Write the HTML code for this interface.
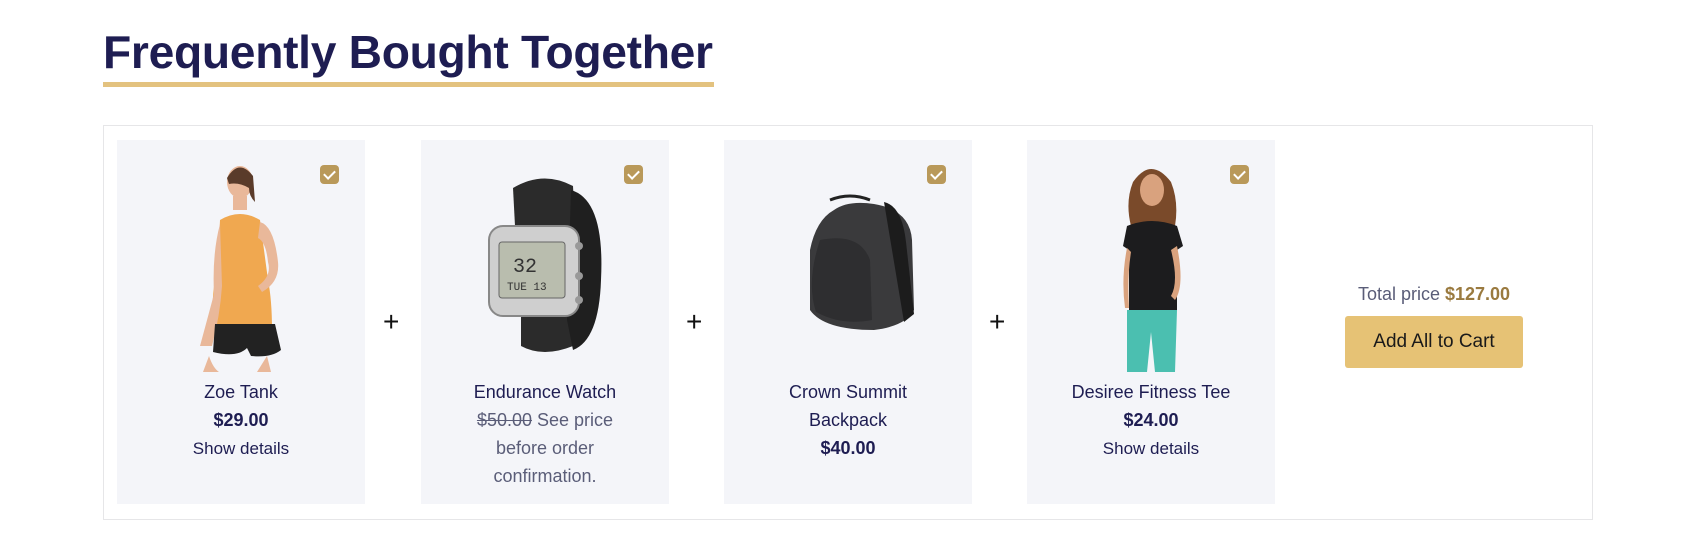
<!DOCTYPE html>
<html><head><meta charset="utf-8">
<style>
*{margin:0;padding:0;box-sizing:border-box}
body{width:1696px;height:553px;background:#fff;font-family:"Liberation Sans",sans-serif;position:relative;overflow:hidden;color:#1e1d52}
h1{position:absolute;left:103px;top:25px;font-size:46.2px;font-weight:700;color:#1e1d52;letter-spacing:-0.3px;white-space:nowrap}
.ul{position:absolute;left:103px;top:82px;width:611px;height:5px;background:#e3c27f}
.box{position:absolute;left:103px;top:125px;width:1490px;height:395px;border:1px solid #e6e6e8}
.card{position:absolute;top:140px;width:248px;height:364px;background:#f4f5f9;text-align:center}
.chk{position:absolute;right:26px;top:25px;width:19px;height:19px;border-radius:4px;background:#b9995a}
.chk:after{content:"";position:absolute;left:6px;top:3px;width:5px;height:9px;border:solid #fff;border-width:0 2.5px 2.5px 0;transform:rotate(45deg)}
.img{position:absolute;left:0;top:20px;width:248px;height:212px}
.txt{position:absolute;left:32px;right:32px;top:238px;font-size:18px;line-height:28px;color:#1e1d52}
.txt b{font-weight:700}
.txt .s{font-size:17px;color:#1e1d52}
.g{color:#5a5d78}
.plus{position:absolute;top:306px;font-size:28px;color:#111;font-weight:300}
.tot{position:absolute;left:1335px;width:198px;top:284px;text-align:center;font-size:18px;color:#5a5d78;white-space:nowrap}
.tot b{color:#9a7a3f}
.btn{position:absolute;left:1345px;top:316px;width:178px;height:52px;background:#e6c275;border-radius:3px;font-size:19px;line-height:52px;text-align:center;color:#1a1a1a}
</style></head><body>
<h1>Frequently Bought Together</h1>
<div class="ul"></div>
<div class="box"></div>

<div class="card" style="left:117px">
<svg class="img" viewBox="0 0 248 212">
<ellipse cx="123" cy="22" rx="13" ry="16" fill="#e9b89a"/><path d="M110 18 q12 -20 26 -2 l2 26 q-6 -6 -6 -14 q-10 -6 -20 -4z" fill="#5a3b2a"/>
<path d="M116 36 h14 v14 h-14z" fill="#e9b89a"/>
<path d="M103 60 q20 -12 40 0 l8 60 q4 20 4 50 l-60 -4 q0 -40 6 -60z" fill="#f0a850"/>
<path d="M143 62 q14 4 18 40 q2 20 -16 30 l-4 -6 q14 -10 10 -24 q-2 -20 -10 -24z" fill="#e9b89a"/>
<path d="M103 64 q-8 30 -6 70 q-8 30 -14 52 h12 q8 -30 10 -60z" fill="#e9b89a"/>
<path d="M98 164 h60 l6 26 q-10 8 -30 6 l-4 -8 q-10 10 -34 4z" fill="#222"/>
<path d="M92 196 q4 12 10 16 h-16z M150 196 l4 16 h-14z" fill="#e9b89a"/>
</svg>
<div class="chk"></div>
<div class="txt">Zoe Tank<br><b>$29.00</b><br><span class="s">Show details</span></div>
</div>
<div class="plus" style="left:383px">+</div>

<div class="card" style="left:421px">
<svg class="img" viewBox="0 0 248 212">
<path d="M92 28 q30 -18 60 -2 l2 40 h-60z" fill="#2b2b2b"/>
<path d="M100 150 l50 0 l2 36 q-30 12 -52 0z" fill="#2b2b2b"/>
<path d="M150 30 q34 10 30 90 q-2 60 -28 70 l-6 -30z" fill="#1f1f1f"/>
<rect x="68" y="66" width="90" height="90" rx="14" fill="#cfcfcf" stroke="#888" stroke-width="2"/>
<rect x="78" y="82" width="66" height="56" rx="3" fill="#b9bdae" stroke="#666"/>
<text x="92" y="112" font-size="20" font-family="Liberation Mono" fill="#333">32</text>
<text x="86" y="130" font-size="11" font-family="Liberation Mono" fill="#333">TUE 13</text>
<circle cx="158" cy="86" r="4" fill="#999"/><circle cx="158" cy="116" r="4" fill="#999"/><circle cx="158" cy="140" r="4" fill="#999"/>
</svg>
<div class="chk"></div>
<div class="txt" style="left:44px;right:44px">Endurance Watch<br><span class="g"><s>$50.00</s> See price before order confirmation.</span></div>
</div>
<div class="plus" style="left:686px">+</div>

<div class="card" style="left:724px">
<svg class="img" viewBox="0 0 248 212">
<path d="M110 50 q14 -10 40 -6 q36 6 38 36 l2 70 q-8 16 -40 20 q-50 0 -64 -20 l0 -60 q6 -30 24 -40z" fill="#3a3a3c"/>
<path d="M160 42 q18 4 22 40 l8 72 l-10 8 l-10 -60z" fill="#1c1c1c"/>
<path d="M96 80 q40 -8 50 20 l2 60 q-30 6 -56 -8 q-10 -30 4 -72z" fill="#2e2e30"/>
<path d="M106 40 q20 -8 40 0" stroke="#222" stroke-width="3" fill="none"/>
</svg>
<div class="chk"></div>
<div class="txt">Crown Summit Backpack<br><b>$40.00</b></div>
</div>
<div class="plus" style="left:989px">+</div>

<div class="card" style="left:1027px">
<svg class="img" viewBox="0 0 248 212">
<path d="M106 22 q18 -26 38 0 q8 20 4 44 l-44 0 q-6 -24 2 -44z" fill="#7a4a2a"/>
<ellipse cx="125" cy="30" rx="12" ry="16" fill="#d9a27e"/>
<path d="M100 66 q25 -10 50 0 l6 20 l-6 4 l0 60 l-48 0 l0 -60 l-6 -4z" fill="#1c1c1e"/>
<path d="M100 150 h50 l-2 62 h-20 l-4 -40 l-4 40 h-20z" fill="#4bbfb0"/>
<path d="M150 86 q8 40 -2 54 l-4 -4 q8 -14 0 -46z M100 88 q-6 30 -2 60 l4 0 q-2 -30 2 -56z" fill="#d9a27e"/>
</svg>
<div class="chk"></div>
<div class="txt" style="left:20px;right:20px">Desiree Fitness Tee<br><b>$24.00</b><br><span class="s">Show details</span></div>
</div>

<div class="tot">Total price <b>$127.00</b></div>
<div class="btn">Add All to Cart</div>
</body></html>
